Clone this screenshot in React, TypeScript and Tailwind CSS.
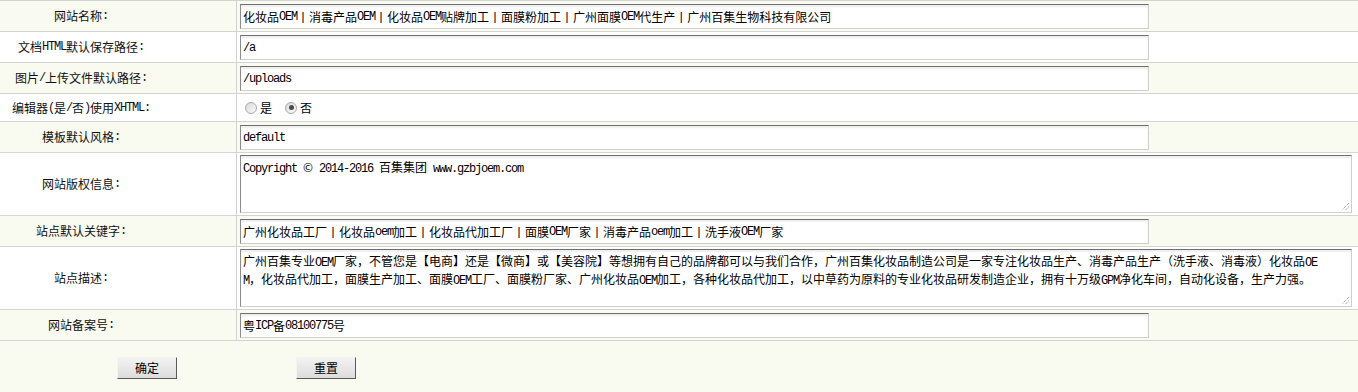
import React from "react";

const CJK = "font-['Noto_Sans_CJK_SC','Noto_Sans_CJK_TC',sans-serif]";
const MONO = "font-['Liberation_Mono',monospace] tracking-[-1.2px]";

function Mixed({ text }: { text: string }) {
  const parts = text.match(/[\x20-\x7E]+|[^\x20-\x7E]+/g) || [];
  return (
    <>
      {parts.map((p, i) =>
        /^[\x20-\x7E]/.test(p) ? (
          <span key={i} className={MONO}>
            {p}
          </span>
        ) : (
          <span key={i} className={CJK}>
            {p}
          </span>
        )
      )}
    </>
  );
}

function Label({ text }: { text: string }) {
  return (
    <div className="w-[237px] shrink-0 border-r border-[#d3d3d3] flex items-center justify-center pr-[74px] text-[12px] leading-[16px] text-[#111] whitespace-pre">
      <Mixed text={text} />
    </div>
  );
}

function Input({ value }: { value: string }) {
  return (
    <div className="h-[25px] w-[909px] bg-white border border-[#cfcfcf] border-t-[#6f6f6f] border-l-[#8c8c8c] shadow-[inset_0_2px_2px_rgba(0,0,0,0.07)] flex items-center pl-[2px] text-[12px] leading-[16px] text-black whitespace-pre overflow-hidden">
      <Mixed text={value} />
    </div>
  );
}

function Grip() {
  return (
    <svg
      className="absolute right-[1px] bottom-[1px]"
      width="10"
      height="10"
      viewBox="0 0 10 10"
    >
      <line x1="9" y1="2" x2="2" y2="9" stroke="#8a8a8a" strokeWidth="1" strokeDasharray="1 1" />
      <line x1="9" y1="5.5" x2="5.5" y2="9" stroke="#8a8a8a" strokeWidth="1" strokeDasharray="1 1" />
    </svg>
  );
}

function TextArea({ lines }: { lines: string[] }) {
  return (
    <div className="relative h-[58px] w-[1112px] bg-white border border-[#cfcfcf] border-t-[#6f6f6f] border-l-[#8c8c8c] shadow-[inset_0_2px_2px_rgba(0,0,0,0.07)] pt-[3px] pl-[2px] text-[12px] leading-[16px] text-black overflow-hidden">
      {lines.map((l, i) => (
        <div key={i} className="whitespace-pre">
          <Mixed text={l} />
        </div>
      ))}
      <Grip />
    </div>
  );
}

function Radio({ checked }: { checked?: boolean }) {
  return (
    <div className="w-[12px] h-[12px] rounded-full border border-[#a8a8a8] bg-gradient-to-br from-[#d9d9d9] to-[#fbfbfb] flex items-center justify-center">
      {checked && <div className="w-[5px] h-[5px] rounded-full bg-[#4a4a4a]" />}
    </div>
  );
}

function Row({
  label,
  cream,
  h,
  children,
  top = 3,
}: {
  label: string;
  cream?: boolean;
  h: string;
  children: React.ReactNode;
  top?: number;
}) {
  return (
    <div className={`flex border-b border-[#d3d3d3] ${h} ${cream ? "bg-[#f9faf0]" : "bg-white"}`}>
      <Label text={label} />
      <div className={`flex-1 pl-[3px] ${top === 3 ? "pt-[3px]" : "pt-[2px]"}`}>{children}</div>
    </div>
  );
}

function Button({ text }: { text: string }) {
  return (
    <div className="w-[60px] h-[22px] border border-t-[#f4f4f4] border-l-[#f4f4f4] border-r-[#5a5a5a] border-b-[#5a5a5a] bg-gradient-to-b from-[#f3f3f3] to-[#dcdcdc] flex items-center justify-center text-[12px] leading-[16px] text-black">
      <span className={CJK}>{text}</span>
    </div>
  );
}

export default function App() {
  return (
    <div className="w-[1358px] h-[392px] bg-[#f9faf0] overflow-hidden">
      <div className="border-t border-[#d3d3d3]">
        <Row label="网站名称:" cream h="h-[31px]">
          <Input value="化妆品OEM丨消毒产品OEM丨化妆品OEM贴牌加工丨面膜粉加工丨广州面膜OEM代生产丨广州百集生物科技有限公司" />
        </Row>
        <Row label="文档HTML默认保存路径:" h="h-[31px]">
          <Input value="/a" />
        </Row>
        <Row label="图片/上传文件默认路径:" cream h="h-[31px]">
          <Input value="/uploads" />
        </Row>
        <div className="flex border-b border-[#d3d3d3] h-[28px] bg-white">
          <Label text="编辑器(是/否)使用XHTML:" />
          <div className="flex-1 flex items-center pl-[8px] text-[12px] leading-[16px] text-black">
            <Radio />
            <span className={`${CJK} ml-[3px]`}>是</span>
            <div className="ml-[13px]">
              <Radio checked />
            </div>
            <span className={`${CJK} ml-[3px]`}>否</span>
          </div>
        </div>
        <Row label="模板默认风格:" cream h="h-[31px]">
          <Input value="default" />
        </Row>
        <Row label="网站版权信息:" h="h-[63px]" top={2}>
          <TextArea lines={["Copyright © 2014-2016 百集集团 www.gzbjoem.com"]} />
        </Row>
        <Row label="站点默认关键字:" cream h="h-[31px]">
          <Input value="广州化妆品工厂丨化妆品oem加工丨化妆品代加工厂丨面膜OEM厂家丨消毒产品oem加工丨洗手液OEM厂家" />
        </Row>
        <Row label="站点描述:" h="h-[63px]" top={2}>
          <TextArea
            lines={[
              "广州百集专业OEM厂家，不管您是【电商】还是【微商】或【美容院】等想拥有自己的品牌都可以与我们合作，广州百集化妆品制造公司是一家专注化妆品生产、消毒产品生产（洗手液、消毒液）化妆品OE",
              "M，化妆品代加工，面膜生产加工、面膜OEM工厂、面膜粉厂家、广州化妆品OEM加工，各种化妆品代加工，以中草药为原料的专业化妆品研发制造企业，拥有十万级GPM净化车间，自动化设备，生产力强。",
            ]}
          />
        </Row>
        <Row label="网站备案号:" cream h="h-[31px]">
          <Input value="粤ICP备08100775号" />
        </Row>
        <div className="flex pt-[16px] pl-[117px] bg-[#f9faf0]">
          <Button text="确定" />
          <div className="ml-[119px]">
            <Button text="重置" />
          </div>
        </div>
      </div>
    </div>
  );
}
